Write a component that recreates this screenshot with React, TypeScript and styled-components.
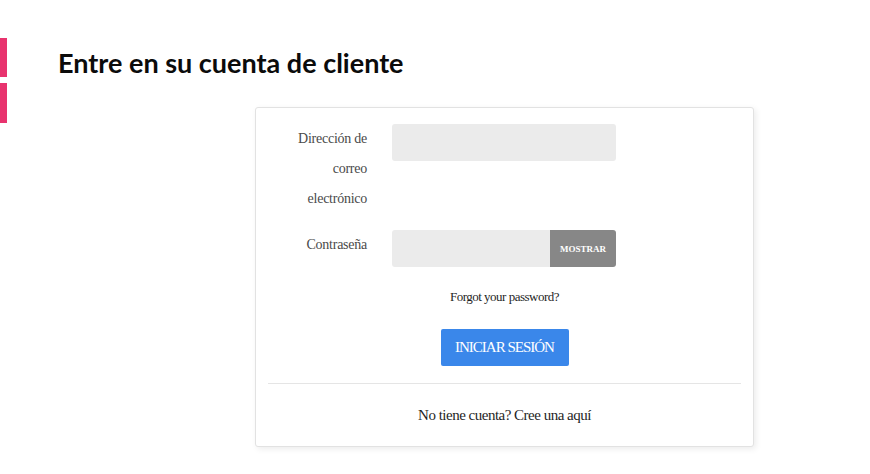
import React from 'react';
import styled, {createGlobalStyle} from "styled-components";

const GlobalStyle = createGlobalStyle`
  html, body {
    margin: 0;
    padding: 0;
    background: #fff;
  }

  body {
    font-family: "Liberation Serif", "Times New Roman", serif;
    color: #1f1f1f;
  }
`;

function App(): JSX.Element {
    return (
        <Page>
            <GlobalStyle/>
            <Accent>
                <AccentBar/>
                <AccentBar/>
            </Accent>
            <Main>
                <Title>Entre en su cuenta de cliente</Title>
                <Card>
                    <Form>
                        <Label>Dirección de<br/>correo<br/>electrónico</Label>
                        <Field>
                            <Input type="email"/>
                        </Field>
                        <Label>Contraseña</Label>
                        <Field>
                            <Input type="password"/>
                            <ShowButton type="button">Mostrar</ShowButton>
                        </Field>
                    </Form>
                    <Forgot href="#">Forgot your password?</Forgot>
                    <SubmitRow>
                        <Submit type="button">Iniciar sesión</Submit>
                    </SubmitRow>
                    <Divider/>
                    <Register href="#">No tiene cuenta? Cree una aquí</Register>
                </Card>
            </Main>
        </Page>
    );
}

const Page = styled.div`
  display: flex;
  align-items: flex-start;
  width: 870px;
  min-height: 474px;
`;

const Accent = styled.div`
  display: flex;
  flex-direction: column;
  gap: 6px;
  margin-top: 38px;
  width: 7px;
`;

const AccentBar = styled.div`
  height: 39px;
  background: #e8336e;

  & + & {
    height: 40px;
  }
`;

const Main = styled.div`
  padding-left: 51px;
  padding-top: 45px;
`;

const Title = styled.h1`
  margin: 0;
  font-family: Lato, "Open Sans", sans-serif;
  font-weight: 700;
  font-size: 27px;
  line-height: 35px;
  color: #0b0b0b;
`;

const Card = styled.div`
  margin: 27px 0 0 197px;
  padding: 16px 12px 21px;
  box-sizing: border-box;
  width: 499px;
  border: 1px solid #e2e2e2;
  border-radius: 3px;
  box-shadow: 2px 2px 6px rgba(0, 0, 0, 0.08);
  background: #fff;
`;

const Form = styled.div`
  display: grid;
  grid-template-columns: 99px 224px;
  column-gap: 25px;
  row-gap: 16px;
`;

const Label = styled.label`
  text-align: right;
  font-size: 14px;
  line-height: 30px;
  letter-spacing: -0.25px;
  color: #4a4a4a;
`;

const Field = styled.div`
  display: flex;
  height: 37px;
`;

const Input = styled.input`
  flex: 1;
  min-width: 0;
  border: none;
  border-radius: 3px;
  background: #ebebeb;
  outline: none;
`;

const ShowButton = styled.button`
  width: 66px;
  border: none;
  border-radius: 0 3px 3px 0;
  background: #878787;
  color: #fff;
  font-family: "Liberation Serif", serif;
  font-weight: 700;
  font-size: 9px;
  text-transform: uppercase;
  margin-left: -3px;
`;

const Forgot = styled.a`
  display: block;
  margin-top: 21px;
  text-align: center;
  font-size: 13px;
  line-height: 18px;
  letter-spacing: -0.5px;
  color: #1f1f1f;
  text-decoration: none;
`;

const SubmitRow = styled.div`
  display: flex;
  justify-content: center;
  margin-top: 23px;
`;

const Submit = styled.button`
  width: 128px;
  height: 37px;
  border: none;
  border-radius: 2px;
  background: #3a87ea;
  color: #fff;
  font-family: "Liberation Serif", serif;
  font-size: 15px;
  letter-spacing: -1px;
  text-transform: uppercase;
`;

const Divider = styled.hr`
  margin: 17px 0 0;
  border: none;
  border-top: 1px solid #e5e5e5;
`;

const Register = styled.a`
  display: block;
  margin-top: 21px;
  text-align: center;
  font-size: 15px;
  line-height: 20px;
  letter-spacing: -0.5px;
  color: #1f1f1f;
  text-decoration: none;
`;

export default App;
